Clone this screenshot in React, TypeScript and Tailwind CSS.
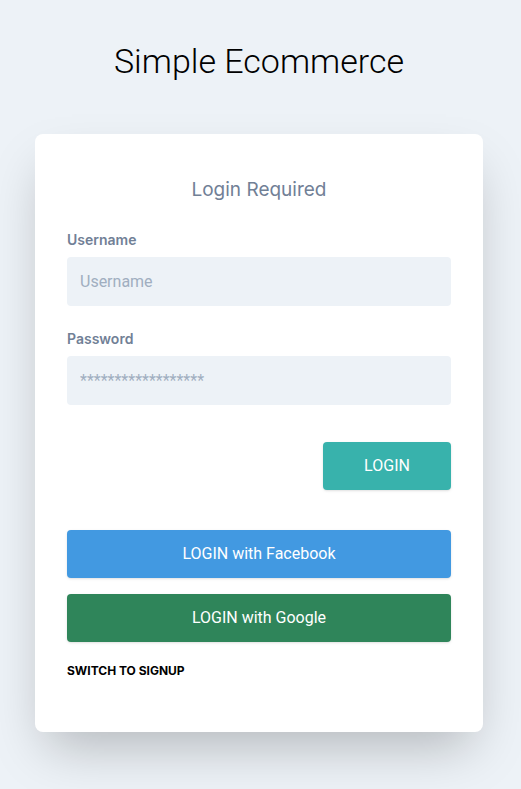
import React from 'react';

export default function App() {
  return (
    <div className="min-h-screen bg-[#edf2f7] pt-[39px] pr-[3px] font-['Inter','Noto_Sans',sans-serif]">
      <h1 className="text-center text-[34px] leading-[44px] font-light text-black font-['Roboto',sans-serif]">
        Simple Ecommerce
      </h1>

      <div className="mx-auto mt-[51px] w-[448px] rounded-lg bg-white px-8 pt-[42px] pb-[53px] shadow-[0_25px_50px_-12px_rgba(0,0,0,0.25)]">
        <h2 className="text-center text-[19px] leading-7 text-[#718096] mb-[26px]">Login Required</h2>

        <form onSubmit={(e) => e.preventDefault()}>
          <label className="block text-sm font-semibold text-[#718096] mb-[7px]">Username</label>
          <input
            type="text"
            placeholder="Username"
            className="block w-full h-[49px] rounded bg-[#edf2f7] px-[13px] text-base text-[#4a5568] placeholder-[#a0aec0] outline-none font-['Roboto',sans-serif]"
          />

          <label className="block mt-[23px] text-sm font-semibold text-[#718096] mb-[7px]">Password</label>
          <input
            type="text"
            placeholder="******************"
            className="block w-full h-[49px] rounded bg-[#edf2f7] px-[13px] text-base text-[#4a5568] placeholder-[#a0aec0] outline-none font-['Roboto',sans-serif]"
          />

          <div className="mt-[37px] flex justify-end">
            <button className="w-32 h-12 rounded bg-[#38b2ac] text-white text-base shadow font-['Roboto',sans-serif]">
              LOGIN
            </button>
          </div>

          <button className="mt-10 block w-full h-12 rounded bg-[#4299e1] text-white text-base shadow font-['Roboto',sans-serif]">
            LOGIN with Facebook
          </button>
          <button className="mt-4 block w-full h-12 rounded bg-[#2f855a] text-white text-base shadow font-['Roboto',sans-serif]">
            LOGIN with Google
          </button>

          <div className="mt-[21px] text-xs font-bold text-black">SWITCH TO SIGNUP</div>
        </form>
      </div>
    </div>
  );
}
